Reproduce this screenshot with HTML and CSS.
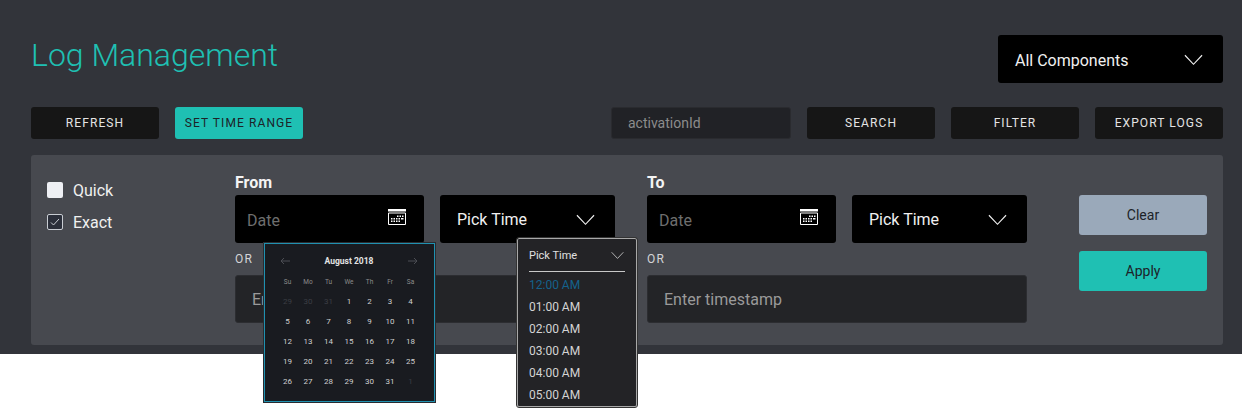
FILE: index.html
```html
<!DOCTYPE html>
<html>
<head>
    <meta http-equiv="Content-Type" content="text/html; charset=UTF-8">
    <title>Log Management</title>
    <link rel="stylesheet" href="styles.css">
</head>

<body>
<svg class="defs" width="0" height="0">
    <symbol id="chev" viewBox="0 0 20 12"><path d="M1 1l9 9.500 9-9.500" fill="none" stroke="currentColor" stroke-width="1.200"/></symbol>
    <symbol id="cal" viewBox="0 0 18 16">
        <path d="M0 0h18v2.500H0z" fill="#fff"/>
        <path d="M.5 4h17v11.500H.5z" fill="none" stroke="#fff"/>
        <path d="M9 6.500h1.500V8H9zM11.500 6.500H13V8h-1.500zM14 6.500h1.500V8H14zM3 9h1.500v1.500H3zM5.500 9H7v1.500H5.500zM8 9h1.500v1.500H8zM10.500 9H12v1.500h-1.500zM13 9h2.500v1.500H13zM3 11.500h1.500V13H3zM5.500 11.500H7V13H5.500zM8 11.500h1.500V13H8zM10.500 11.500H12V13h-1.500z" fill="#fff"/>
    </symbol>
</svg>
<div class="page">
    <div class="header">
        <h1 class="title">Log Management</h1>
        <div class="select select-components">All Components <svg class="chev"><use href="#chev"/></svg></div>
    </div>
    <div class="toolbar">
        <div class="btn btn-dark">REFRESH</div>
        <div class="btn btn-teal">SET TIME RANGE</div>
        <div class="search">activationId</div>
        <div class="btn btn-dark">SEARCH</div>
        <div class="btn btn-dark">FILTER</div>
        <div class="btn btn-dark">EXPORT LOGS</div>
    </div>
    <div class="panel">
        <div class="options">
            <div class="option"><span class="box box-off"></span>Quick</div>
            <div class="option"><span class="box box-on"><svg width="14" height="14" viewBox="0 0 14 14"><path d="M3 7.500l2.500 2.500L11 4" fill="none" stroke="#c8ccd2" stroke-width="1"/></svg></span>Exact</div>
        </div>
        <div class="range">
            <div class="range-label">From</div>
            <div class="range-row">
                <div class="date">Date <svg class="cal"><use href="#cal"/></svg></div>
                <div class="select select-time">Pick Time <svg class="chev"><use href="#chev"/></svg></div>
            </div>
            <div class="or">OR</div>
            <div class="stamp">Enter timestamp</div>
        </div>
        <div class="range">
            <div class="range-label">To</div>
            <div class="range-row">
                <div class="date">Date <svg class="cal"><use href="#cal"/></svg></div>
                <div class="select select-time">Pick Time <svg class="chev"><use href="#chev"/></svg></div>
            </div>
            <div class="or">OR</div>
            <div class="stamp">Enter timestamp</div>
        </div>
        <div class="actions">
            <div class="action action-clear">Clear</div>
            <div class="action action-apply">Apply</div>
        </div>
    </div>
</div>

<div class="calendar">
    <div class="cal-head">
        <svg class="arrow" viewBox="0 0 10 8"><path d="M10 4H1M4 1L1 4l3 3" fill="none" stroke="currentColor"/></svg>
        <b>August 2018</b>
        <svg class="arrow" viewBox="0 0 10 8"><path d="M0 4h9M6 1l3 3-3 3" fill="none" stroke="currentColor"/></svg>
    </div>
    <div class="cal-grid">
        <i>Su</i><i>Mo</i><i>Tu</i><i>We</i><i>Th</i><i>Fr</i><i>Sa</i>
        <span class="out">29</span><span class="out">30</span><span class="out">31</span><span>1</span><span>2</span><span>3</span><span>4</span>
        <span>5</span><span>6</span><span>7</span><span>8</span><span>9</span><span>10</span><span>11</span>
        <span>12</span><span>13</span><span>14</span><span>15</span><span>16</span><span>17</span><span>18</span>
        <span>19</span><span>20</span><span>21</span><span>22</span><span>23</span><span>24</span><span>25</span>
        <span>26</span><span>27</span><span>28</span><span>29</span><span>30</span><span>31</span><span class="out">1</span>
    </div>
</div>

<div class="timelist">
    <div class="time-head">Pick Time <svg class="chev-small"><use href="#chev"/></svg></div>
    <div class="time-item time-active">12:00 AM</div>
    <div class="time-item">01:00 AM</div>
    <div class="time-item">02:00 AM</div>
    <div class="time-item">03:00 AM</div>
    <div class="time-item">04:00 AM</div>
    <div class="time-item">05:00 AM</div>
</div>
</body>
</html>
```

FILE: styles.css
```css
body {
  margin: 0;
  height: 410px;
  overflow: hidden;
  position: relative;
  background: #fff;
  font-family: Roboto, "Liberation Sans", sans-serif;
  color: #f0f0f0;
}
.defs { position: absolute; }

.page {
  height: 354px;
  box-sizing: border-box;
  padding: 35px 19px 0 31px;
  background: #32343a;
}

.header {
  display: flex;
  justify-content: space-between;
  height: 48px;
  margin-bottom: 24px;
}
.title {
  margin: 0;
  font-size: 32px;
  line-height: 41px;
  font-weight: 300;
  color: #1fc0b3;
}

.select {
  display: flex;
  align-items: center;
  justify-content: space-between;
  box-sizing: border-box;
  height: 48px;
  padding-top: 1px;
  background: #000;
  border-radius: 3px;
  font-size: 16px;
  color: #f0f0f0;
}
.select-components { width: 225px; padding-top: 2px; padding-left: 17px; padding-right: 20px; }
.select-time { width: 175px; padding-left: 17px; padding-right: 20px; }
.chev { width: 19px; height: 12px; color: #f0f0f0; }
.chev-small { width: 13px; height: 9px; color: #d8d8d8; }

.toolbar {
  display: flex;
  height: 32px;
  margin-bottom: 16px;
}
.btn {
  width: 128px;
  height: 32px;
  margin-right: 16px;
  border-radius: 3px;
  font-size: 12px;
  line-height: 32px;
  letter-spacing: 1.100px;
  text-align: center;
}
.btn:last-child { margin-right: 0; }
.btn-dark { background: #161616; color: #e4e4e4; }
.btn-teal { background: #1fc0b3; color: #1d2328; }
.search {
  box-sizing: border-box;
  width: 180px;
  height: 32px;
  margin-left: auto;
  margin-right: 16px;
  padding-left: 16px;
  background: #212226;
  border: 1px solid #2a2b2f;
  border-radius: 3px;
  font-size: 14px;
  line-height: 31px;
  color: #8c8c8c;
}

.panel {
  display: flex;
  height: 190px;
  box-sizing: border-box;
  padding: 16px 16px 0;
  background: #47494f;
  border-radius: 3px;
}
.options { width: 188px; padding-top: 3px; }
.option {
  display: flex;
  align-items: center;
  height: 32px;
  font-size: 16px;
  color: #f0f0f0;
}
.box {
  display: flex;
  align-items: center;
  justify-content: center;
  box-sizing: border-box;
  width: 16px;
  height: 16px;
  margin-right: 10px;
  border-radius: 2px;
}
.box-off { background: #eef0f4; }
.box-on { background: #2b2f3a; border: 1px solid #c8ccd2; }

.range { width: 380px; margin-right: 32px; }
.range-label {
  height: 24px;
  font-size: 16px;
  line-height: 24px;
  font-weight: 700;
  color: #f4f4f4;
}
.range-row { display: flex; justify-content: space-between; }
.date {
  display: flex;
  align-items: center;
  justify-content: space-between;
  box-sizing: border-box;
  width: 189px;
  height: 48px;
  padding: 2px 18px 0 12px;
  background: #000;
  border-radius: 3px;
  font-size: 16px;
  color: #6e6e6e;
}
.cal { width: 18px; height: 16px; margin-bottom: 6px; }
.or {
  height: 32px;
  font-size: 12px;
  line-height: 32px;
  letter-spacing: 1.200px;
  color: #d4d4d6;
}
.stamp {
  box-sizing: border-box;
  height: 48px;
  padding-left: 16px;
  background: #232427;
  border: 1px solid #2c2d31;
  border-radius: 3px;
  font-size: 16px;
  line-height: 47px;
  color: #9a9a9a;
}

.actions { width: 128px; margin-left: 20px; padding-top: 24px; }
.action {
  height: 40px;
  margin-bottom: 16px;
  border-radius: 3px;
  font-size: 14px;
  line-height: 40px;
  text-align: center;
  color: #1d2328;
}
.action-clear { background: #9aa9ba; }
.action-apply { background: #1fc0b3; }

/* popups lie over the panel */
.calendar {
  position: absolute;
  left: 264px;
  top: 243px;
  box-sizing: border-box;
  width: 171px;
  height: 159px;
  padding: 8px 5px 0 4px;
  background: #191b20;
  border: 1px solid #2091b0;
  outline: 1px solid #2a2b30;
}
.cal-head {
  display: flex;
  justify-content: space-between;
  align-items: center;
  height: 18px;
  padding: 0 11px;
  font-size: 8.500px;
  color: #e4e4e4;
}
.arrow { width: 10px; height: 8px; color: #4c4e54; }
.cal-grid {
  display: grid;
  grid-template-columns: repeat(7, 20.500px);
  grid-auto-rows: 20.100px;
  justify-content: center;
  margin-top: 2px;
  font-size: 8px;
  text-align: center;
  line-height: 20px;
  color: #d0d0d0;
}
.cal-grid i { font-style: normal; font-size: 6.500px; color: #8c8c8c; }
.cal-grid .out { color: #3c3e44; }

.timelist {
  position: absolute;
  left: 517px;
  top: 238px;
  box-sizing: border-box;
  width: 120px;
  height: 169px;
  background: #232326;
  border: 1px solid #a8a8a8;
  border-radius: 2px;
  outline: 1px solid #333;
}
.time-head {
  display: flex;
  align-items: center;
  justify-content: space-between;
  height: 32px;
  margin: 0 11px;
  padding-right: 1px;
  border-bottom: 1px solid #c8c8c8;
  font-size: 11px;
  color: #e0e0e0;
}
.time-item {
  height: 22px;
  padding-left: 11px;
  font-size: 12px;
  line-height: 22px;
  color: #d4d4d4;
}
.time-item:nth-child(2) { margin-top: 2px; }
.time-active { color: #14628c; }
```
